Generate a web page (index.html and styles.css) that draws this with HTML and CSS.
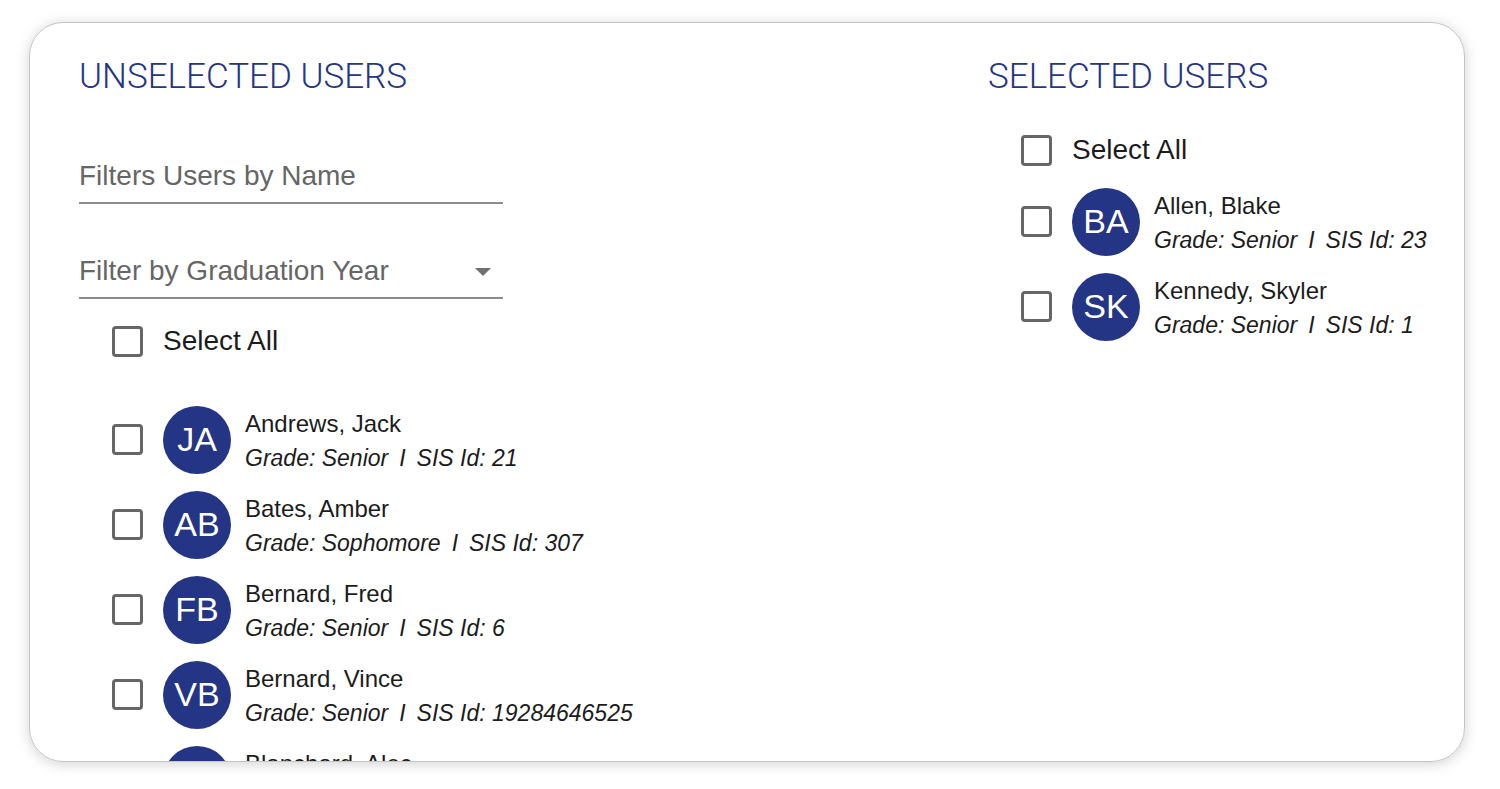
FILE: index.html
```html
<!DOCTYPE html>
<html lang="en">
<head>
    <meta charset="UTF-8">
    <meta name="viewport" content="width=device-width, initial-scale=1.0">
    <title>Select Users</title>
    <link rel="stylesheet" href="styles.css">
</head>
<body>
    <main class="card">
        <section class="unselected">
            <h2>UNSELECTED USERS</h2>

            <div class="filters">
                <input type="text" class="field" id="filter-name" placeholder="Filters Users by Name" aria-label="Filters Users by Name">

                <div class="select-wrap">
                    <select class="field" id="filter-year" aria-label="Filter by Graduation Year">
                        <option>Filter by Graduation Year</option>
                    </select>
                    <svg class="arrow" viewBox="0 0 16 8"><path d="M0 0h16L8 8z"/></svg>
                </div>
            </div>

            <label class="select-all">
                <input type="checkbox">
                <span>Select All</span>
            </label>

            <ul class="users">
                <li>
                    <label class="user">
                        <input type="checkbox">
                        <span class="avatar">JA</span>
                        <span class="info">
                            <span class="name">Andrews, Jack</span>
                            <span class="details">Grade: Senior<span class="sep">I</span>SIS Id: 21</span>
                        </span>
                    </label>
                </li>
                <li>
                    <label class="user">
                        <input type="checkbox">
                        <span class="avatar">AB</span>
                        <span class="info">
                            <span class="name">Bates, Amber</span>
                            <span class="details">Grade: Sophomore<span class="sep">I</span>SIS Id: 307</span>
                        </span>
                    </label>
                </li>
                <li>
                    <label class="user">
                        <input type="checkbox">
                        <span class="avatar">FB</span>
                        <span class="info">
                            <span class="name">Bernard, Fred</span>
                            <span class="details">Grade: Senior<span class="sep">I</span>SIS Id: 6</span>
                        </span>
                    </label>
                </li>
                <li>
                    <label class="user">
                        <input type="checkbox">
                        <span class="avatar">VB</span>
                        <span class="info">
                            <span class="name">Bernard, Vince</span>
                            <span class="details">Grade: Senior<span class="sep">I</span>SIS Id: 19284646525</span>
                        </span>
                    </label>
                </li>
                <li>
                    <label class="user">
                        <input type="checkbox">
                        <span class="avatar"></span>
                        <span class="info">
                            <span class="name">Blanchard, Alec</span>
                        </span>
                    </label>
                </li>
            </ul>
        </section>

        <section class="selected">
            <h2>SELECTED USERS</h2>

            <label class="select-all">
                <input type="checkbox">
                <span>Select All</span>
            </label>

            <ul class="users">
                <li>
                    <label class="user">
                        <input type="checkbox">
                        <span class="avatar">BA</span>
                        <span class="info">
                            <span class="name">Allen, Blake</span>
                            <span class="details">Grade: Senior<span class="sep">I</span>SIS Id: 23</span>
                        </span>
                    </label>
                </li>
                <li>
                    <label class="user">
                        <input type="checkbox">
                        <span class="avatar">SK</span>
                        <span class="info">
                            <span class="name">Kennedy, Skyler</span>
                            <span class="details">Grade: Senior<span class="sep">I</span>SIS Id: 1</span>
                        </span>
                    </label>
                </li>
            </ul>
        </section>
    </main>
</body>
</html>
```
FILE: styles.css
```css
* {
    margin: 0;
    padding: 0;
    box-sizing: border-box;
}

body {
    height: 100vh;
    padding: 22px 35px 27px 29px;
    background: #fff;
    color: #1c1c1c;
    font-family: "Liberation Sans", Arial, sans-serif;
}

.card {
    display: grid;
    grid-template-columns: 1fr 438px;
    height: 100%;
    padding: 34px 38px 0 49px;
    border: 1px solid #c4c4c4;
    border-radius: 34px;
    box-shadow: 0 2px 14px rgba(0, 0, 0, 0.18);
    overflow: hidden;
}

h2 {
    color: #233584;
    font-family: Roboto, sans-serif;
    font-size: 35px;
    font-weight: 300;
    line-height: 40px;
}

.filters {
    display: flex;
    flex-direction: column;
    gap: 40px;
    max-width: 424px;
    margin-top: 52px;
}

.field {
    display: block;
    width: 100%;
    height: 55px;
    border: none;
    border-bottom: 2px solid #8c8c8c;
    border-radius: 0;
    outline: none;
    background: none;
    color: #666;
    font-family: inherit;
    font-size: 28px;
    appearance: none;
}

.field::placeholder {
    color: #666;
}

.field:focus {
    border-color: #233584;
}

.select-wrap {
    position: relative;
}

.arrow {
    position: absolute;
    top: 24px;
    right: 12px;
    width: 16px;
    height: 8px;
    fill: #707070;
    pointer-events: none;
}

.select-all,
.user {
    display: flex;
    align-items: center;
    gap: 20px;
    padding-left: 33px;
    cursor: pointer;
}

.select-all {
    height: 40px;
    font-size: 28px;
}

.unselected .select-all {
    margin: 22px 0 36px;
}

.selected .select-all {
    margin: 33px 0 9px;
}

input[type="checkbox"] {
    flex: none;
    width: 31px;
    height: 31px;
    border: 3px solid #666;
    border-radius: 4px;
    appearance: none;
    cursor: pointer;
}

input[type="checkbox"]:checked {
    border-color: #233584;
    background: #233584;
}

.users {
    list-style: none;
}

.user {
    height: 85px;
}

.avatar {
    display: flex;
    flex: none;
    align-items: center;
    justify-content: center;
    width: 68px;
    height: 68px;
    border-radius: 50%;
    background: #233584;
    color: #fff;
    font-size: 34px;
}

.info {
    display: flex;
    flex-direction: column;
    height: 68px;
    margin-left: -6px;
    padding-top: 1px;
    line-height: 34px;
    white-space: nowrap;
}

.name {
    font-size: 24px;
}

.details {
    font-size: 23px;
    font-style: italic;
}

.sep {
    margin: 0 11px;
}
```
